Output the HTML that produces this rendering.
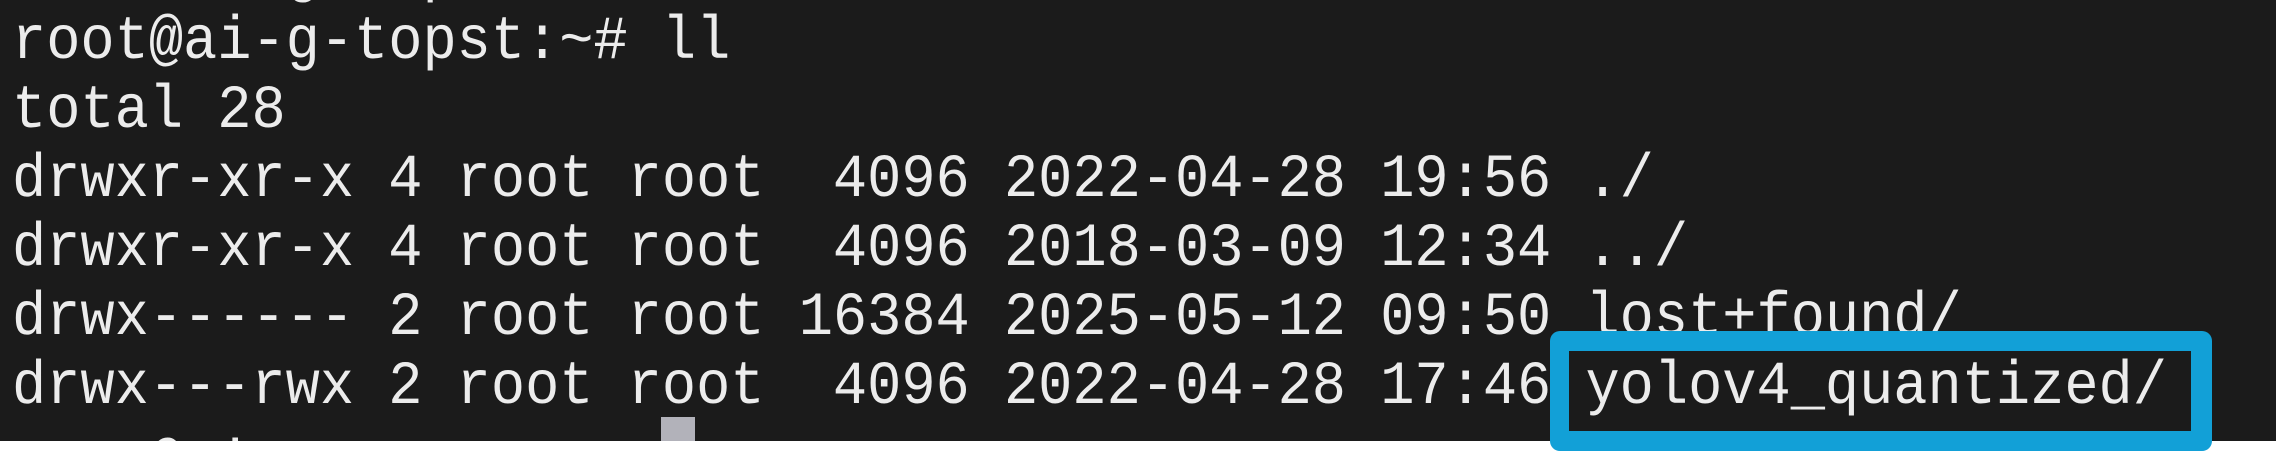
<!DOCTYPE html>
<html><head><meta charset="utf-8"><style>
html,body{margin:0;padding:0;background:#fff;}
body{width:2276px;height:452px;position:relative;overflow:hidden;}
#term{position:absolute;left:0;top:0;width:2276px;height:441px;background:#1b1b1b;overflow:hidden;}
.l{position:absolute;left:12px;font-family:"Liberation Mono",monospace;font-size:57px;line-height:69px;color:#ececec;white-space:pre;letter-spacing:0px;transform:scaleY(1.08);transform-origin:0 50px;}
#cur{position:absolute;left:661px;top:417px;width:34px;height:30px;background:#b2b2ba;}
#box{position:absolute;left:1550px;top:331px;width:622px;height:80px;border:20px solid #12a0d7;border-left-width:19px;border-right-width:21px;border-radius:10px;}
</style></head><body>
<div id="term">
<div class="l" style="top:-58px">root@ai-g-topst:~#</div>
<div class="l" style="top:10px">root@ai-g-topst:~# ll</div>
<div class="l" style="top:79px">total 28</div>
<div class="l" style="top:148px">drwxr-xr-x 4 root root  4096 2022-04-28 19:56 ./</div>
<div class="l" style="top:217px">drwxr-xr-x 4 root root  4096 2018-03-09 12:34 ../</div>
<div class="l" style="top:286px">drwx------ 2 root root 16384 2025-05-12 09:50 lost+found/</div>
<div class="l" style="top:355px">drwx---rwx 2 root root  4096 2022-04-28 17:46 yolov4_quantized/</div>
<div class="l" style="top:434px">root@ai-g-topst:~#</div>
<div id="cur"></div>
</div>
<div id="box"></div>
</body></html>
